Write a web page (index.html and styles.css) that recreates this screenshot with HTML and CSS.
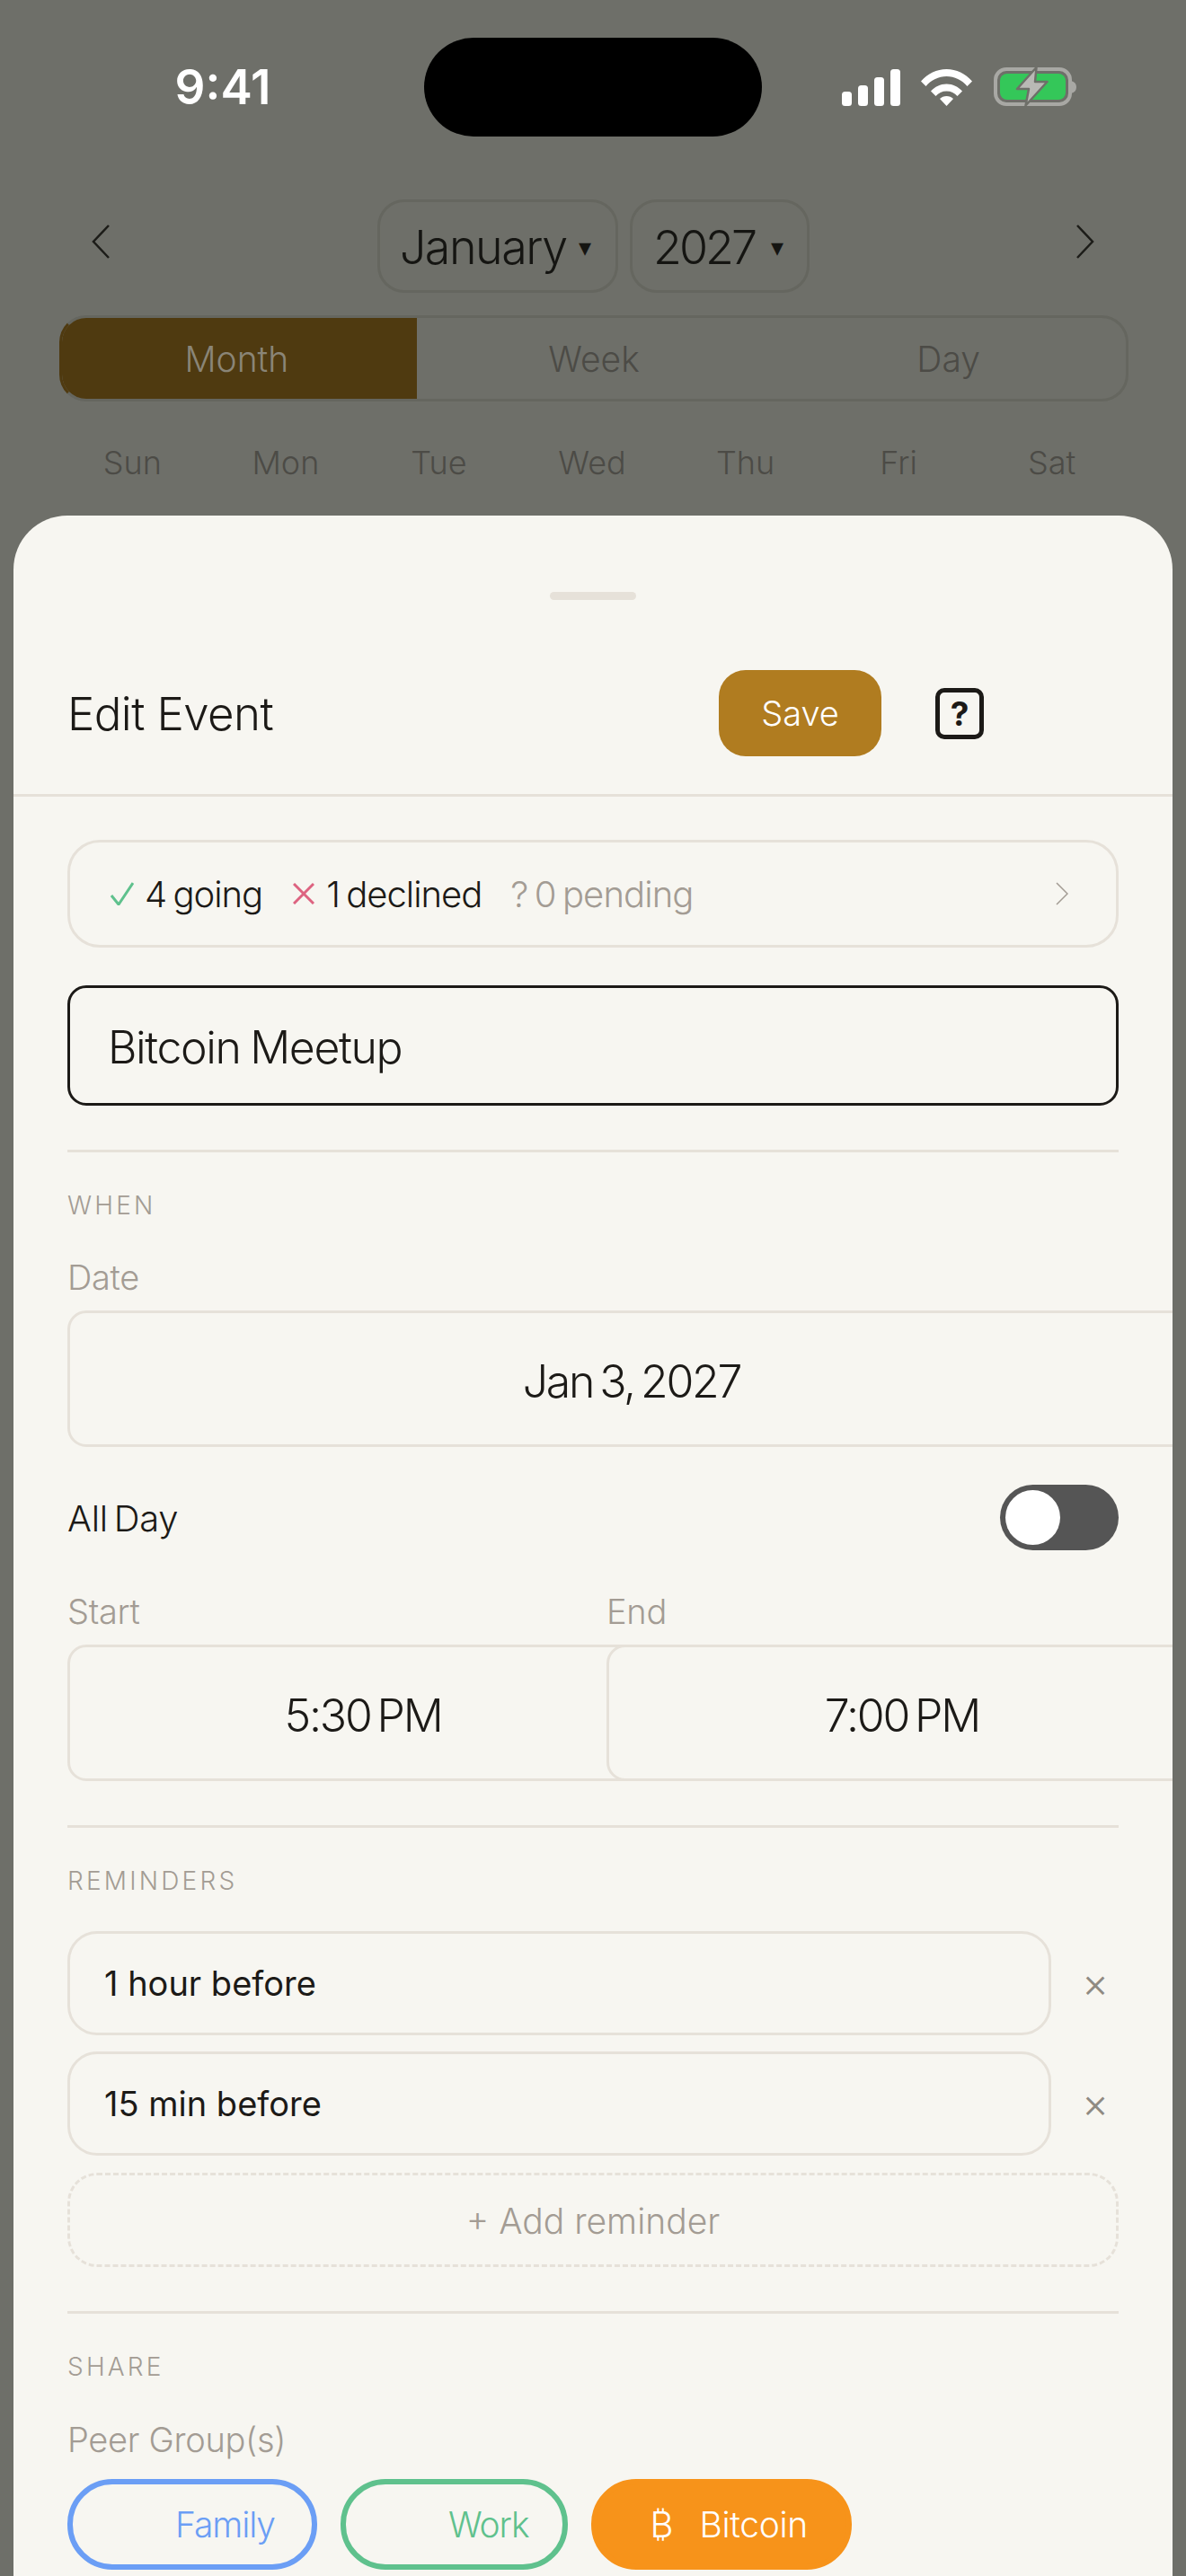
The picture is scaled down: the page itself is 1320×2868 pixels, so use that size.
FILE: index.html
```html
<!DOCTYPE html>
<html lang="en">

<head>
    <meta charset="UTF-8">
    <title>Edit Event</title>
    <link rel="stylesheet" href="styles.css">
</head>

<body>
    <div class="phone">
        <div class="backdrop">
            <div class="status-bar">
                <div class="status-time">9:41</div>
                <div class="island"></div>
                <div class="status-icons">
                    <svg class="icon-signal" viewBox="0 0 65 41" width="65" height="41">
                        <rect x="0" y="25" width="11" height="16" rx="3.5" />
                        <rect x="18" y="18" width="11" height="23" rx="3.5" />
                        <rect x="36" y="9" width="11" height="32" rx="3.5" />
                        <rect x="54" y="0" width="11" height="41" rx="3.5" />
                    </svg>
                    <svg class="icon-wifi" viewBox="0 0 57 41" width="57" height="41">
                        <path d="M0 13.5C7.500 5 17.500 0 28.500 0S49.500 5 57 13.500L51.500 19C45.500 12 37.500 8 28.500 8S11.500 12 5.500 19Z" />
                        <path d="M11 24.500C15.500 19.500 21.500 16.500 28.500 16.500S41.500 19.500 46 24.500L40.500 30C37.500 26.500 33.500 24.500 28.500 24.500S19.500 26.500 16.500 30Z" />
                        <path d="M21 33C23 31 25.500 30 28.500 30S34 31 36 33L28.500 41Z" />
                    </svg>
                    <svg class="icon-battery" viewBox="0 0 92 46" width="92" height="46">
                        <rect x="2" y="3" width="83" height="39" rx="12" fill="none" stroke="#a8a8a4" stroke-width="4" />
                        <rect x="7" y="8" width="73" height="29" rx="8" fill="#34c759" />
                        <path d="M86 16c4 1 6 3.500 6 7s-2 6-6 7Z" fill="#a8a8a4" />
                        <path d="M47.500 1 26 25H39L35.500 43.500 59.500 17H46Z" fill="#b9b9b5" stroke="#6e6f69" stroke-width="2.500" stroke-linejoin="round" />
                    </svg>
                </div>
            </div>
            <div class="cal-nav">
                <svg class="cal-chevron" viewBox="0 0 20 40" width="20" height="40">
                    <path d="M19 1 2 19l17 18" />
                </svg>
                <div class="cal-selects">
                    <div class="cal-select select-month">January <span class="caret">▾</span></div>
                    <div class="cal-select select-year">2027 <span class="caret">▾</span></div>
                </div>
                <svg class="cal-chevron" viewBox="0 0 20 40" width="20" height="40">
                    <path d="M1 1l17 18L1 37" />
                </svg>
            </div>
            <div class="view-tabs">
                <div class="view-tab active">Month</div>
                <div class="view-tab">Week</div>
                <div class="view-tab">Day</div>
            </div>
            <div class="weekdays">
                <div>Sun</div>
                <div>Mon</div>
                <div>Tue</div>
                <div>Wed</div>
                <div>Thu</div>
                <div>Fri</div>
                <div>Sat</div>
            </div>
        </div>

        <div class="sheet">
            <div class="sheet-handle"></div>
            <div class="sheet-header">
                <div class="sheet-title">Edit Event</div>
                <button class="save-btn">Save</button>
                <div class="help-btn">?</div>
            </div>
            <div class="sheet-body">
                <div class="rsvp-card">
                    <svg class="rsvp-icon" viewBox="0 0 26 26" width="26" height="26">
                        <path d="M1 15l8 10L25 1" stroke="#5fc18d" />
                    </svg>
                    <span class="rsvp-text">4 going</span>
                    <svg class="rsvp-icon rsvp-x" viewBox="0 0 24 24" width="24" height="24">
                        <path d="M1 1l22 22M23 1 1 23" stroke="#dd6380" />
                    </svg>
                    <span class="rsvp-text">1 declined</span>
                    <span class="rsvp-text muted rsvp-pending">? 0 pending</span>
                    <svg class="rsvp-chevron" viewBox="0 0 14 26" width="14" height="26">
                        <path d="M1 1l12 12L1 25" />
                    </svg>
                </div>

                <div class="name-input">Bitcoin Meetup</div>
                <div class="divider"></div>

                <div class="section-label">When</div>
                <div class="field-label">Date</div>
                <div class="picker picker-date">Jan 3, 2027</div>

                <div class="toggle-row">
                    <span class="toggle-label">All Day</span>
                    <div class="toggle">
                        <div class="toggle-knob"></div>
                    </div>
                </div>

                <div class="time-grid">
                    <div class="time-col">
                        <div class="field-label">Start</div>
                        <div class="picker picker-time">5:30 PM</div>
                    </div>
                    <div class="time-col">
                        <div class="field-label">End</div>
                        <div class="picker picker-time">7:00 PM</div>
                    </div>
                </div>
                <div class="divider"></div>

                <div class="section-label">Reminders</div>
                <div class="reminder-row first">
                    <div class="reminder-input">1 hour before</div>
                    <div class="reminder-remove">×</div>
                </div>
                <div class="reminder-row">
                    <div class="reminder-input">15 min before</div>
                    <div class="reminder-remove">×</div>
                </div>
                <div class="add-reminder">+ Add reminder</div>
                <div class="divider"></div>

                <div class="section-label">Share</div>
                <div class="field-label peer-label">Peer Group(s)</div>
                <div class="chips">
                    <div class="chip chip-family"><span class="chip-icon"></span>Family</div>
                    <div class="chip chip-work"><span class="chip-icon"></span>Work</div>
                    <div class="chip chip-bitcoin"><span class="chip-icon">₿</span>Bitcoin</div>
                </div>
            </div>
        </div>
    </div>
</body>

</html>
```

FILE: styles.css
```css
* {
    box-sizing: border-box;
}

body {
    margin: 0;
    font-family: Inter, "Noto Sans", sans-serif;
    font-weight: 300;
    color: #1c1a17;
    background-color: #6e6f69;
}

.phone {
    position: relative;
    width: 1320px;
    height: 2868px;
    overflow: hidden;
}

/* dimmed calendar behind the sheet */
.status-bar {
    display: grid;
    grid-template-columns: 472px 376px 1fr;
    align-items: center;
    padding-top: 42px;
}

.status-time {
    padding-left: 24px;
    text-align: center;
    font-size: 53px;
    font-weight: 600;
    color: #fff;
}

.island {
    height: 110px;
    border-radius: 55px;
    background-color: #000;
}

.status-icons {
    display: flex;
    align-items: center;
    padding-left: 89px;
}

.icon-signal,
.icon-wifi {
    fill: #fff;
}

.icon-signal {
    margin-right: 23px;
}

.icon-wifi {
    margin-right: 24px;
}

.cal-nav {
    display: flex;
    justify-content: space-between;
    align-items: center;
    height: 104px;
    margin-top: 70px;
    padding: 0 102px;
}

.cal-chevron {
    margin-top: -8px;
}

.cal-chevron path {
    fill: none;
    stroke: #1c1c18;
    stroke-width: 2.5;
}

.cal-selects {
    display: flex;
    gap: 13px;
}

.cal-select {
    display: flex;
    align-items: center;
    justify-content: center;
    gap: 13px;
    height: 104px;
    padding-top: 3px;
    border: 3px solid #65665f;
    border-radius: 30px;
    font-size: 52px;
    letter-spacing: -1.5px;
    color: #151512;
}

.select-month {
    width: 268px;
    padding-right: 6px;
}

.select-year {
    width: 200px;
    padding-right: 5px;
    gap: 18px;
    letter-spacing: -3px;
}

.caret {
    font-family: "DejaVu Sans", sans-serif;
    font-size: 28px;
}

.view-tabs {
    display: flex;
    height: 96px;
    margin: 25px 64px 0 66px;
    border: 3px solid #65665f;
    border-left-color: #4f3a10;
    border-radius: 30px;
    overflow: hidden;
}

.view-tab {
    flex: 0 0 33.333%;
    display: flex;
    align-items: center;
    justify-content: center;
    font-size: 39px;
    color: #4c4b46;
}

.view-tab.active {
    padding-right: 6px;
    background-color: #4f3a10;
    color: #8a8577;
}

.weekdays {
    display: grid;
    grid-template-columns: repeat(7, 1fr);
    margin: 45px 64px 0 62px;
    font-size: 36px;
    line-height: 46px;
    text-align: center;
    color: #4c4b46;
}

/* edit sheet */
.sheet {
    position: absolute;
    top: 574px;
    left: 15px;
    right: 15px;
    bottom: 0;
    overflow: hidden;
    border-radius: 60px 60px 0 0;
    background-color: #f7f6f1;
}

.sheet-handle {
    width: 96px;
    height: 9px;
    margin: 85px auto 0;
    border-radius: 5px;
    background-color: #e6e1d9;
}

.sheet-header {
    display: flex;
    align-items: center;
    padding: 78px 210px 42px 60px;
    border-bottom: 3px solid #e6e1d9;
}

.sheet-title {
    flex: 1;
    font-size: 51px;
    letter-spacing: -0.6px;
}

.save-btn {
    width: 181px;
    height: 96px;
    border: none;
    border-radius: 30px;
    font-family: inherit;
    font-weight: 300;
    font-size: 38px;
    color: #fff;
    background-color: #b07c20;
}

.help-btn {
    width: 54px;
    height: 57px;
    margin-left: 60px;
    border: 5px solid #1c1a17;
    border-radius: 10px;
    font-size: 37px;
    font-weight: 700;
    line-height: 47px;
    text-align: center;
}

.sheet-body {
    padding: 48px 60px 0;
}

.rsvp-card {
    display: flex;
    align-items: center;
    height: 120px;
    padding: 0 53px 0 45px;
    border: 3px solid #e6e1d9;
    border-radius: 36px;
}

.rsvp-icon {
    flex: none;
    margin-right: 12px;
}

.rsvp-icon path,
.rsvp-chevron path {
    fill: none;
    stroke-width: 3;
}

.rsvp-x {
    margin-left: 34px;
    margin-right: 13px;
}

.rsvp-text {
    font-size: 40px;
    letter-spacing: -1px;
    word-spacing: -3px;
}

.muted {
    color: #a39c94;
}

.rsvp-pending {
    flex: 1;
    margin-left: 32px;
    letter-spacing: -0.9px;
}

.rsvp-chevron path {
    stroke: #a39c94;
    stroke-width: 1.5;
}

.name-input {
    display: flex;
    align-items: center;
    height: 134px;
    margin-top: 42px;
    padding: 4px 0 0 42px;
    border: 3px solid #1c1a17;
    border-radius: 21px;
    font-size: 50px;
    letter-spacing: -1.4px;
    word-spacing: -2px;
}

.divider {
    height: 3px;
    margin-top: 49px;
    background-color: #e6e1d9;
}

.section-label {
    margin-top: 39px;
    font-size: 28px;
    line-height: 40px;
    letter-spacing: 3.200px;
    text-transform: uppercase;
    color: #a39c94;
}

.field-label {
    margin-top: 38px;
    margin-bottom: 15px;
    font-size: 38px;
    line-height: 44px;
    letter-spacing: -0.3px;
    color: #a39c94;
}

.picker {
    display: flex;
    align-items: center;
    justify-content: center;
    height: 152px;
    padding-top: 5px;
    border: 3px solid #e6e1d9;
    border-radius: 21px;
    font-size: 50px;
    letter-spacing: -2.200px;
    word-spacing: -5px;
    background-color: #f7f6f1;
}

.picker-date {
    width: 1256px;
}

.picker-time {
    width: 658px;
}

.toggle-row {
    display: flex;
    justify-content: space-between;
    align-items: center;
    margin-top: 42px;
}

.toggle-label {
    padding-top: 2px;
    font-size: 40px;
    letter-spacing: -0.3px;
    word-spacing: -4px;
}

.toggle {
    width: 132px;
    height: 73px;
    padding: 6px;
    border-radius: 37px;
    background-color: #555;
}

.toggle-knob {
    width: 61px;
    height: 61px;
    border-radius: 50%;
    background-color: #fff;
}

.time-grid {
    display: grid;
    grid-template-columns: 585px 585px;
    column-gap: 15px;
    margin-top: 8px;
}

.reminder-row {
    display: flex;
    align-items: center;
    margin-top: 18px;
}

.reminder-row.first {
    margin-top: 36px;
}

.reminder-input {
    display: flex;
    align-items: center;
    width: 1095px;
    height: 116px;
    padding-left: 38px;
    border: 3px solid #e6e1d9;
    border-radius: 33px;
    font-size: 38px;
    font-weight: 400;
}

.reminder-remove {
    width: 50px;
    margin-left: 24px;
    padding-bottom: 3px;
    font-size: 46px;
    text-align: center;
    color: #8f8a82;
}

.add-reminder {
    display: flex;
    align-items: center;
    justify-content: center;
    height: 105px;
    margin-top: 19px;
    padding-top: 2px;
    border: 3px dashed #e6e1d9;
    border-radius: 33px;
    font-size: 39px;
    color: #a39c94;
}

.peer-label {
    margin-top: 39px;
    margin-bottom: 22px;
}

.chips {
    display: flex;
    gap: 26px;
}

.chip {
    display: flex;
    align-items: center;
    height: 101px;
    padding: 0 41px 0 45px;
    border: 6px solid;
    border-radius: 50px;
    font-size: 39px;
    letter-spacing: -1.100px;
}

.chip-icon {
    width: 69px;
    padding-left: 14px;
    font-size: 40px;
}

.chip-family {
    border-color: #6b9ef5;
    color: #6b9ef5;
}

.chip-work {
    padding-right: 38px;
    border-color: #5fc18d;
    color: #5fc18d;
}

.chip-bitcoin {
    padding-right: 43px;
    border-color: #f7931a;
    letter-spacing: -0.3px;
    color: #fff;
    background-color: #f7931a;
}
```
